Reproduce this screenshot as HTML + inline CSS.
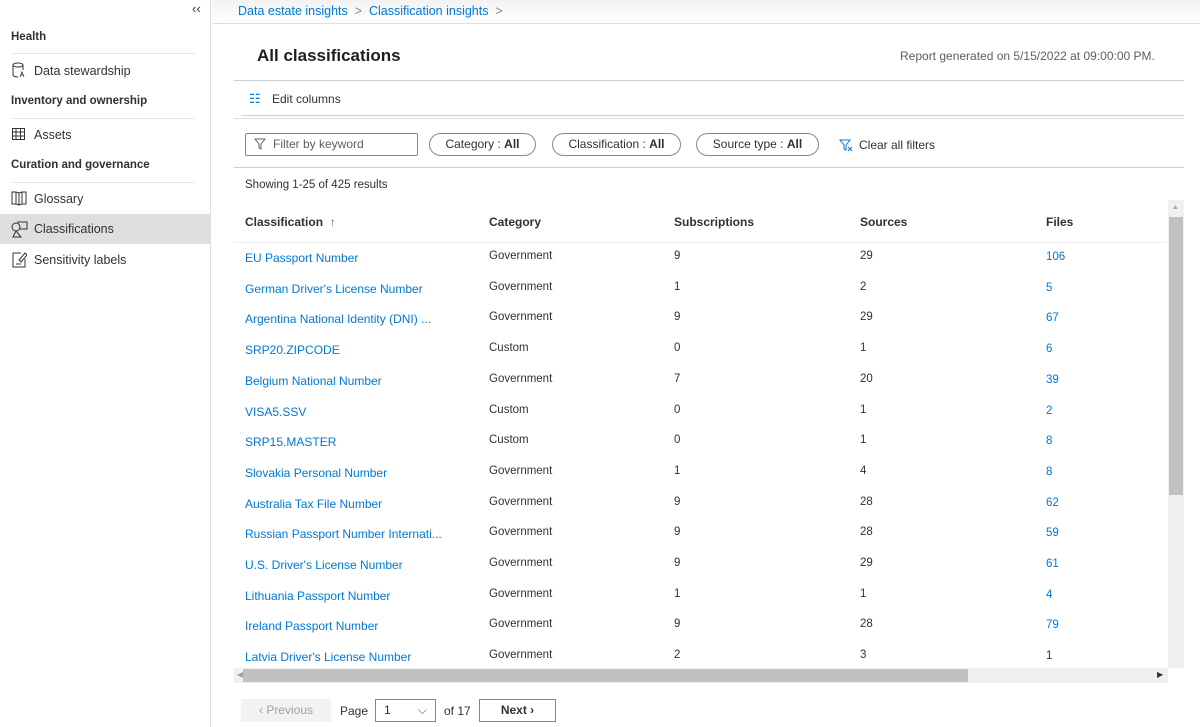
<!DOCTYPE html>
<html><head><meta charset="utf-8"><style>
*{box-sizing:border-box;margin:0;padding:0}
body{width:1200px;height:727px;overflow:hidden;background:#fff;font-family:"Liberation Sans",sans-serif;color:#323130;position:relative}
.a{position:absolute;white-space:nowrap}
.side{position:absolute;left:0;top:0;width:211px;height:727px;border-right:1px solid #e1dfdd;background:#fff}
.hdr{font-size:11.5px;font-weight:bold;color:#323130}
.nav{font-size:12.5px;color:#323130}
.sep{position:absolute;left:11px;width:184px;height:1px;background:#e8e8e8}
.link{color:#0078d4}
.hl{position:absolute;background:#e1dfdd}
.pill{position:absolute;top:133px;height:23px;border:1px solid #8a8886;border-radius:12px;font-size:12px;line-height:21px;text-align:center;color:#323130}
.row{position:absolute;left:245px;font-size:11.5px;width:920px}
.row span{position:absolute;white-space:nowrap;top:0}
</style></head><body>
<div class="side">
<div class="a" style="left:192px;top:1px;font-size:13px;color:#333">‹‹</div>
<div class="a hdr" style="left:11px;top:31px">Health</div>
<div class="sep" style="top:53px"></div>
<svg class="a" style="left:12px;top:62px" width="14" height="16" viewBox="0 0 14 16"><ellipse cx="6" cy="3" rx="5" ry="2" fill="none" stroke="#333"/><path d="M1 3v10c0 1 2 2 5 2M11 3v5" fill="none" stroke="#333"/><path d="M8 15l2-5 2 5M9 13h2" fill="none" stroke="#333" stroke-width=".8"/></svg>
<div class="a nav" style="left:34px;top:64px">Data stewardship</div>
<div class="a hdr" style="left:11px;top:95px">Inventory and ownership</div>
<div class="sep" style="top:118px"></div>
<svg class="a" style="left:12px;top:128px" width="13" height="12"><rect x=".5" y=".5" width="12" height="11" fill="none" stroke="#333"/><path d="M0 4h13M0 8h13M4 0v12M8.5 0v12" stroke="#333"/></svg>
<div class="a nav" style="left:34px;top:128px">Assets</div>
<div class="a hdr" style="left:11px;top:159px">Curation and governance</div>
<div class="sep" style="top:182px"></div>
<svg class="a" style="left:11px;top:190px" width="16" height="16"><path d="M1 2h4l3 1 3-1h4v12h-4l-3 1-3-1H1z M8 3v12 M5 2v12 M11 2v12" fill="none" stroke="#333"/></svg>
<div class="a nav" style="left:34px;top:192px">Glossary</div>
<div class="hl" style="left:0;top:214px;width:210px;height:30px"></div>
<svg class="a" style="left:11px;top:221px" width="18" height="17"><rect x="7" y="1" width="9" height="7" fill="none" stroke="#333"/><circle cx="5" cy="6" r="4" fill="#e1dfdd" stroke="#333"/><path d="M5 10l-3 6h8z" fill="none" stroke="#333"/></svg>
<div class="a nav" style="left:34px;top:222px">Classifications</div>
<svg class="a" style="left:12px;top:251px" width="15" height="17"><path d="M1 2h8M1 2v14h12V8" fill="none" stroke="#333"/><path d="M7 9l6-7 2 2-6 7z M4 13h5" fill="none" stroke="#333"/></svg>
<div class="a nav" style="left:34px;top:253px">Sensitivity labels</div>
</div>
<div class="a" style="left:212px;top:0;width:988px;height:24px;border-bottom:1px solid #e1dfdd;background:linear-gradient(#f3f3f3,#fff)"></div>
<div class="a link" style="left:238px;top:4px;font-size:12.5px">Data estate insights <span style="color:#888">&nbsp;&gt;&nbsp;</span> Classification insights <span style="color:#888">&nbsp;&gt;</span></div>
<div class="a" style="left:257px;top:46px;font-size:17px;font-weight:bold;color:#201f1e">All classifications</div>
<div class="a" style="left:900px;top:49px;font-size:12px;color:#605e5c">Report generated on 5/15/2022 at 09:00:00 PM.</div>
<div class="a" style="left:234px;top:80px;width:950px;height:1px;background:#d2d0ce"></div>
<div class="a" style="left:249px;top:91px;font-size:13px;color:#0078d4">☷</div>
<div class="a" style="left:272px;top:92px;font-size:12px">Edit columns</div>
<div class="a" style="left:241px;top:115px;width:943px;height:1px;background:#d2d0ce"></div>
<div class="a" style="left:234px;top:118px;width:950px;height:1px;background:#e1dfdd"></div>
<div class="a" style="left:245px;top:133px;width:173px;height:23px;border:1px solid #8a8886;border-radius:2px;font-size:12px;line-height:21px;padding-left:27px;color:#605e5c">Filter by keyword</div>
<svg class="a" style="left:254px;top:138px" width="12" height="12"><path d="M1 1h10L7 6v5L5 10V6z" fill="none" stroke="#605e5c"/></svg>
<div class="pill" style="left:429px;width:107px">Category : <b>All</b></div>
<div class="pill" style="left:552px;width:129px">Classification : <b>All</b></div>
<div class="pill" style="left:696px;width:123px">Source type : <b>All</b></div>
<svg class="a" style="left:839px;top:139px" width="14" height="13"><path d="M1 1h10L7 6v5L5 10V6z" fill="none" stroke="#0078d4"/><path d="M9 8l4 4M13 8l-4 4" stroke="#0078d4"/></svg>
<div class="a" style="left:859px;top:138px;font-size:12px">Clear all filters</div>
<div class="a" style="left:234px;top:167px;width:950px;height:1px;background:#d2d0ce"></div>
<div class="a" style="left:245px;top:179px;font-size:11.5px">Showing 1-25 of 425 results</div>
<div class="row" style="top:215px;font-size:12px;font-weight:bold;color:#323130">
<span style="left:0">Classification <span style="position:static;font-weight:normal;color:#605e5c">&nbsp;↑</span></span><span style="left:244px">Category</span><span style="left:429px">Subscriptions</span><span style="left:615px">Sources</span><span style="left:801px">Files</span></div>
<div class="a" style="left:234px;top:242px;width:932px;height:1px;background:#edebe9"></div>
<div id="rows"></div>
<div class="a" style="left:1168px;top:200px;width:16px;height:468px;background:#f0f0f0"></div>
<div class="a" style="left:1169px;top:217px;width:14px;height:278px;background:#c1c1c1"></div>
<div class="a" style="left:1172px;top:204px;font-size:7px;color:#a0a0a0">▲</div>
<div class="a" style="left:234px;top:668px;width:934px;height:15px;background:#f0f0f0"></div>
<div class="a" style="left:243px;top:669px;width:725px;height:13px;background:#c1c1c1"></div>
<div class="a" style="left:237px;top:670px;font-size:8px;color:#a0a0a0">◀</div>
<div class="a" style="left:1157px;top:670px;font-size:8px;color:#333">▶</div>
<div class="a" style="left:241px;top:699px;width:90px;height:23px;background:#f3f2f1;font-size:12px;line-height:23px;text-align:center;color:#a19f9d">‹ Previous</div>
<div class="a" style="left:340px;top:704px;font-size:12px">Page</div>
<div class="a" style="left:375px;top:699px;width:61px;height:23px;border:1px solid #8a8886;font-size:12px;line-height:21px;padding-left:8px">1<span style="position:absolute;right:8px;color:#605e5c">⌵</span></div>
<div class="a" style="left:444px;top:704px;font-size:12px">of 17</div>
<div class="a" style="left:479px;top:699px;width:77px;height:23px;border:1px solid #8a8886;font-size:12px;line-height:21px;text-align:center;font-weight:bold">Next ›</div>
<script>
var d=[["EU Passport Number","Government",9,29,106],["German Driver's License Number","Government",1,2,5],["Argentina National Identity (DNI) ...","Government",9,29,67],["SRP20.ZIPCODE","Custom",0,1,6],["Belgium National Number","Government",7,20,39],["VISA5.SSV","Custom",0,1,2],["SRP15.MASTER","Custom",0,1,8],["Slovakia Personal Number","Government",1,4,8],["Australia Tax File Number","Government",9,28,62],["Russian Passport Number Internati...","Government",9,28,59],["U.S. Driver's License Number","Government",9,29,61],["Lithuania Passport Number","Government",1,1,4],["Ireland Passport Number","Government",9,28,79],["Latvia Driver's License Number","Government",2,3,1]];
var h="";d.forEach(function(r,i){var t=251+i*30.7;h+='<div class="row" style="top:'+t+'px"><span class="link" style="left:0;font-size:12px">'+r[0]+'</span><span style="left:244px;top:-1px">'+r[1]+'</span><span style="left:429px;top:-1px">'+r[2]+'</span><span style="left:615px;top:-1px">'+r[3]+'</span><span class="link" style="left:801px;'+(i==13?'color:#323130;':'')+'">'+r[4]+'</span></div>'});
document.getElementById("rows").innerHTML=h;
</script>
</body></html>
